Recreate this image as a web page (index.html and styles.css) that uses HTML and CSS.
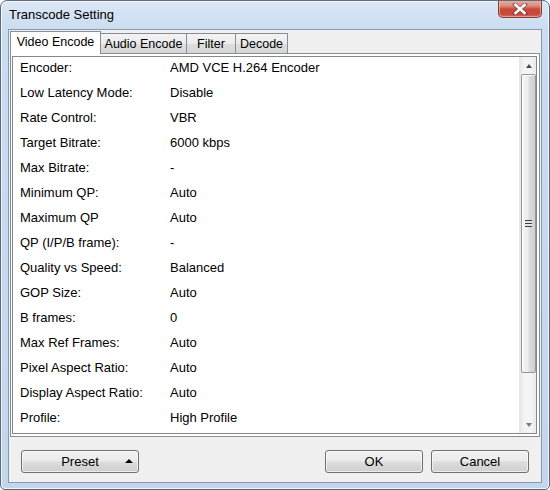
FILE: index.html
```html
<!DOCTYPE html>
<html>
<head>
<meta charset="utf-8">
<link rel="stylesheet" href="styles.css">
</head>
<body>
<div class="window">
  <div class="titlebar">
    <span class="title">Transcode Setting</span>
    <div class="close">
      <svg width="16" height="12" viewBox="0 0 16 12">
        <path d="M3 1.5 L13 10.5 M13 1.5 L3 10.5" stroke="#3c3c3c" stroke-width="4.2" stroke-linecap="square" fill="none" opacity="0.55"/>
        <path d="M3.5 2 L12.5 10 M12.5 2 L3.5 10" stroke="#ffffff" stroke-width="2.6" stroke-linecap="square" fill="none"/>
      </svg>
    </div>
  </div>
  <div class="client">
    <div class="tabs">
      <div class="tab active">Video Encode</div>
      <div class="tab t-audio">Audio Encode</div>
      <div class="tab t-filter">Filter</div>
      <div class="tab t-decode">Decode</div>
    </div>
    <div class="panel">
      <div class="list">
        <div class="rows">
          <div class="row"><span class="lbl">Encoder:</span><span>AMD VCE H.264 Encoder</span></div>
          <div class="row"><span class="lbl">Low Latency Mode:</span><span>Disable</span></div>
          <div class="row"><span class="lbl">Rate Control:</span><span>VBR</span></div>
          <div class="row"><span class="lbl">Target Bitrate:</span><span>6000 kbps</span></div>
          <div class="row"><span class="lbl">Max Bitrate:</span><span>-</span></div>
          <div class="row"><span class="lbl">Minimum QP:</span><span>Auto</span></div>
          <div class="row"><span class="lbl">Maximum QP</span><span>Auto</span></div>
          <div class="row"><span class="lbl">QP (I/P/B frame):</span><span>-</span></div>
          <div class="row"><span class="lbl">Quality vs Speed:</span><span>Balanced</span></div>
          <div class="row"><span class="lbl">GOP Size:</span><span>Auto</span></div>
          <div class="row"><span class="lbl">B frames:</span><span>0</span></div>
          <div class="row"><span class="lbl">Max Ref Frames:</span><span>Auto</span></div>
          <div class="row"><span class="lbl">Pixel Aspect Ratio:</span><span>Auto</span></div>
          <div class="row"><span class="lbl">Display Aspect Ratio:</span><span>Auto</span></div>
          <div class="row"><span class="lbl">Profile:</span><span>High Profile</span></div>
        </div>
        <div class="scrollbar">
          <div class="arrow up"><span class="tri-up"></span></div>
          <div class="thumb"><span class="grip"></span></div>
          <div class="track"></div>
          <div class="arrow down"><span class="tri-down"></span></div>
        </div>
      </div>
    </div>
    <div class="buttons">
      <div class="btn preset"><span></span><span class="btn-text">Preset</span><span class="drop"><span class="tri-up dark"></span></span></div>
      <div class="spacer"></div>
      <div class="btn ok">OK</div>
      <div class="btn cancel">Cancel</div>
    </div>
  </div>
</div>
</body>
</html>
```

FILE: styles.css
```css
html, body {
  margin: 0;
  padding: 0;
  background: #ffffff;
}
body {
  font-family: "Liberation Sans", Arial, sans-serif;
  font-size: 13px;
  color: #000;
}
.window {
  width: 550px;
  height: 490px;
  box-sizing: border-box;
  border: 1px solid #5b6a7d;
  border-radius: 7px 7px 5px 5px;
  background: linear-gradient(180deg, #dbe7f5 0px, #cadcf0 30px, #c3d6ec 100%);
  box-shadow: inset 0 0 0 1px rgba(255,255,255,0.7);
  display: flex;
  flex-direction: column;
  overflow: hidden;
}
.titlebar {
  height: 28px;
  flex: none;
  display: flex;
  justify-content: space-between;
  align-items: flex-start;
}
.title {
  padding-left: 8px;
  line-height: 28px;
  font-size: 13px;
  color: #000;
}
.close {
  width: 44px;
  height: 18px;
  margin-right: 7px;
  margin-top: -1px;
  box-sizing: border-box;
  border: 1px solid #8a3b32;
  border-top: none;
  border-radius: 0 0 5px 5px;
  background: linear-gradient(180deg, #eab3a6 0px, #dd8a7a 6px, #c8493a 9px, #c64a3c 14px, #d9786a 18px);
  box-shadow: inset 0 0 0 1px rgba(255,210,200,0.5);
  display: flex;
  align-items: center;
  justify-content: center;
}
.close svg { display: block; }
.client {
  flex: 1;
  margin: 0 7px 6px 7px;
  box-sizing: border-box;
  border: 1px solid #8799b0;
  background: #f0f0f0;
  display: flex;
  flex-direction: column;
  padding: 1px 0 0 0;
}
.tabs {
  height: 22px;
  display: flex;
  align-items: flex-end;
  padding-left: 1px;
  flex: none;
}
.tab {
  box-sizing: border-box;
  height: 20px;
  border: 1px solid #898c95;
  border-bottom: none;
  margin-left: -1px;
  background: linear-gradient(180deg, #f3f3f3 0%, #ebebeb 50%, #dedede 51%, #d6d6d6 100%);
  font-size: 12.5px;
  display: flex;
  align-items: center;
  justify-content: center;
  padding-top: 1px;
}
.tab.active {
  height: 23px;
  width: 91px;
  margin-left: 0;
  margin-bottom: -1px;
  background: #ffffff;
  position: relative;
  z-index: 2;
  padding-top: 0;
  padding-bottom: 2px;
}
.t-audio { margin-left: 0; border-left: none; width: 86px; }
.t-filter { width: 50px; }
.t-decode { width: 53px; }
.panel {
  margin-left: 1px;
  width: 530px;
  height: 384px;
  box-sizing: border-box;
  border: 1px solid #898c95;
  background: #ffffff;
  padding: 2px 2px 2px 1px;
  flex: none;
}
.list {
  height: 100%;
  box-sizing: border-box;
  border: 1px solid #828790;
  background: #fff;
  display: flex;
}
.rows {
  flex: 1;
  padding-left: 7px;
  margin-top: -2px;
  overflow: hidden;
}
.row {
  height: 25px;
  display: flex;
  align-items: center;
  white-space: nowrap;
}
.lbl {
  width: 150px;
  flex: none;
}
.scrollbar {
  width: 17px;
  flex: none;
  display: flex;
  flex-direction: column;
  background: linear-gradient(90deg, #e3e3e3, #f4f4f4 30%, #f4f4f4 70%, #e9e9e9);
}
.arrow {
  height: 17px;
  display: flex;
  align-items: center;
  justify-content: center;
  padding-left: 2px;
}
.tri-up {
  width: 0; height: 0;
  border-left: 3.5px solid transparent;
  border-right: 3.5px solid transparent;
  border-bottom: 4px solid #4a4a4a;
}
.tri-down {
  width: 0; height: 0;
  border-left: 3.5px solid transparent;
  border-right: 3.5px solid transparent;
  border-top: 4px solid #7a7a7a;
}
.thumb {
  height: 299px;
  margin-left: 2px;
  box-sizing: border-box;
  border: 1px solid #959595;
  border-radius: 2px;
  background: linear-gradient(90deg, #f4f4f4 0%, #ededed 45%, #dcdcdc 55%, #d0d0d0 100%);
  box-shadow: inset 1px 1px 0 #ffffff;
  display: flex;
  align-items: center;
  justify-content: center;
}
.grip {
  width: 7px;
  height: 7px;
  background: repeating-linear-gradient(180deg, #3c3c3c 0px, #3c3c3c 1px, #e6e6e6 1px, #e6e6e6 3px);
}
.track {
  flex: 1;
}
.buttons {
  margin-top: 13px;
  height: 23px;
  display: flex;
  padding: 0 12px 0 12px;
  flex: none;
}
.spacer { flex: 1; }
.btn {
  box-sizing: border-box;
  height: 23px;
  border: 1px solid #707070;
  border-radius: 3px;
  background: linear-gradient(180deg, #f2f2f2 0%, #ebebeb 48%, #dddddd 52%, #cfcfcf 100%);
  box-shadow: inset 0 0 0 1px rgba(255,255,255,0.6);
  display: flex;
  align-items: center;
  justify-content: center;
  font-size: 13px;
  padding-bottom: 1px;
}
.preset {
  width: 118px;
  display: grid;
  grid-template-columns: 1fr auto 1fr;
  align-items: center;
}
.drop {
  justify-self: end;
  margin-right: 5px;
  display: flex;
  align-items: center;
  padding-bottom: 1px;
}
.tri-up.dark {
  border-left-width: 4px;
  border-right-width: 4px;
  border-bottom: 4px solid #000;
}
.ok { width: 98px; }
.cancel { width: 98px; margin-left: 8px; }
```
